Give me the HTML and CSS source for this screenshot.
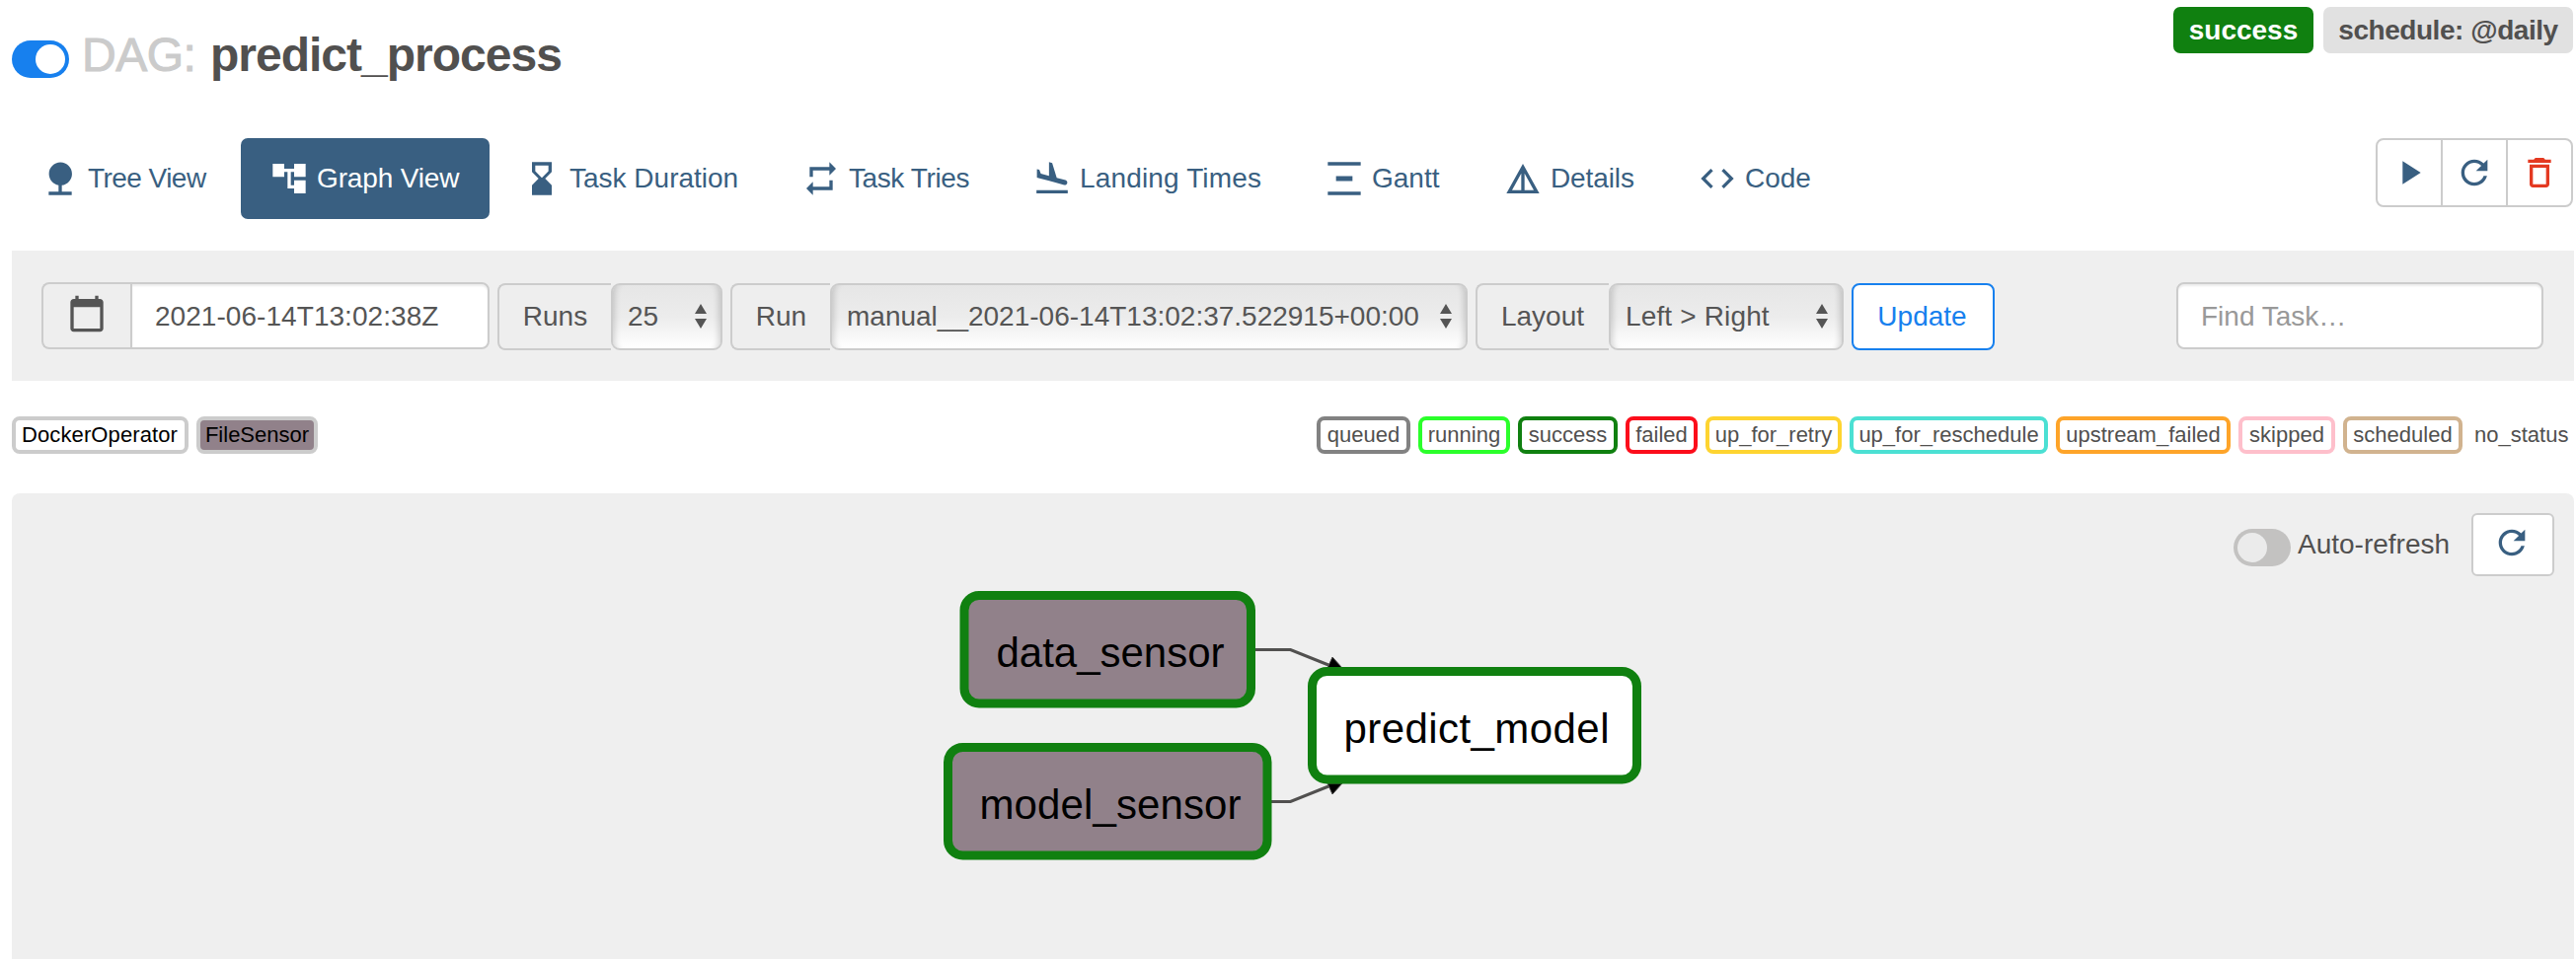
FILE: index.html
```html
<!DOCTYPE html>
<html lang="en">
<head>
<meta charset="utf-8">
<title>predict_process - Graph</title>
<link rel="stylesheet" href="styles.css">
</head>
<body>
<div class="page">
  <header class="dag-header">
    <h1 class="dag-title">
      <span class="toggle toggle-on"></span>
      <span class="dag-prefix">DAG:</span>
      <span class="dag-name">predict_process</span>
    </h1>
    <div class="badges">
      <span class="badge badge-success">success</span>
      <span class="badge badge-schedule">schedule: @daily</span>
    </div>
  </header>

  <div class="nav-row">
    <nav class="tabs">
      <a class="tab tab-tree"><svg class="icon" viewBox="0 0 24 24"><path d="M13 16.12c3.47-.41 6.17-3.36 6.17-6.95 0-3.87-3.13-7-7-7s-7 3.13-7 7c0 3.47 2.52 6.34 5.83 6.89V20H5v2h14v-2h-6v-3.88z"/></svg><span>Tree View</span></a>
      <a class="tab tab-graph active"><svg class="icon" viewBox="0 0 24 24"><path d="M22 11V3h-7v3H9V3H2v8h7V8h2v10h4v3h7v-8h-7v3h-2V8h2v3z"/></svg><span>Graph View</span></a>
      <a class="tab tab-duration"><svg class="icon" viewBox="0 0 24 24"><path d="M18 22l-.01-6L14 12l3.99-4.01L18 2H6v6l4 4-4 3.99V22h12zM8 7.5V4h8v3.5l-4 4-4-4z"/></svg><span>Task Duration</span></a>
      <a class="tab tab-tries"><svg class="icon" viewBox="0 0 24 24"><path d="M7 7h10v3l4-4-4-4v3H5v6h2V7zm10 10H7v-3l-4 4 4 4v-3h12v-6h-2v4z"/></svg><span>Task Tries</span></a>
      <a class="tab tab-landing"><svg class="icon" viewBox="0 0 24 24"><path d="M2.5 19h19v2h-19zm7.18-5.73l4.35 1.16 5.31 1.42c.8.21 1.62-.26 1.84-1.06.21-.8-.26-1.62-1.06-1.84l-5.31-1.42-2.76-9.02L10.12 2v8.28L5.15 8.95l-.93-2.32-1.45-.39v5.17l1.6.43 5.31 1.43z"/></svg><span>Landing Times</span></a>
      <a class="tab tab-gantt"><svg class="icon" viewBox="0 0 24 24"><path d="M22 2v2H2V2h20zM7 10.5v3h10v-3H7zM2 20v2h20v-2H2z"/></svg><span>Gantt</span></a>
      <a class="tab tab-details"><svg class="icon" viewBox="0 0 24 24"><path d="M12 3L2 21h20L12 3zm1 5.92L18.6 19H13V8.920zm-2 0V19H5.4L11 8.920z"/></svg><span>Details</span></a>
      <a class="tab tab-code"><svg class="icon" viewBox="0 0 24 24"><path d="M9.400 16.600L4.800 12l4.600-4.600L8 6l-6 6 6 6 1.400-1.400zm5.200 0l4.600-4.600-4.600-4.600L16 6l6 6-6 6-1.400-1.400z"/></svg><span>Code</span></a>
    </nav>
    <div class="actions">
      <button class="action"><svg class="icon" viewBox="0 0 24 24"><path d="M8 5v14l11-7z"/></svg></button>
      <button class="action"><svg class="icon" viewBox="0 0 24 24"><path d="M17.650 6.350C16.200 4.900 14.210 4 12 4c-4.420 0-7.990 3.580-7.990 8s3.570 8 7.990 8c3.730 0 6.840-2.550 7.730-6h-2.080c-.82 2.330-3.040 4-5.650 4-3.310 0-6-2.690-6-6s2.690-6 6-6c1.660 0 3.140.69 4.220 1.780L13 11h7V4l-2.350 2.350z"/></svg></button>
      <button class="action action-delete"><svg class="icon" viewBox="0 0 24 24"><path d="M16 9v10H8V9h8m-1.500-6h-5l-1 1H5v2h14V4h-3.500l-1-1zM18 7H6v12c0 1.100.9 2 2 2h8c1.100 0 2-.9 2-2V7z"/></svg></button>
    </div>
  </div>

  <form class="filters">
    <div class="group group-date">
      <span class="addon addon-icon"><svg class="icon" viewBox="0 0 24 24"><path d="M20 3h-1V1h-2v2H7V1H5v2H4c-1.100 0-2 .9-2 2v16c0 1.100.9 2 2 2h16c1.100 0 2-.9 2-2V5c0-1.100-.9-2-2-2zm0 18H4V8h16v13z"/></svg></span>
      <span class="field">2021-06-14T13:02:38Z</span>
    </div>
    <div class="group group-runs">
      <span class="addon">Runs</span>
      <span class="select"><span>25</span><svg class="arrows" viewBox="0 0 12 25"><path d="M6 0l6 10H0zM0 15h12L6 25z"/></svg></span>
    </div>
    <div class="group group-run">
      <span class="addon">Run</span>
      <span class="select"><span>manual__2021-06-14T13:02:37.522915+00:00</span><svg class="arrows" viewBox="0 0 12 25"><path d="M6 0l6 10H0zM0 15h12L6 25z"/></svg></span>
    </div>
    <div class="group group-layout">
      <span class="addon">Layout</span>
      <span class="select"><span>Left &gt; Right</span><svg class="arrows" viewBox="0 0 12 25"><path d="M6 0l6 10H0zM0 15h12L6 25z"/></svg></span>
    </div>
    <button class="update" type="button">Update</button>
    <div class="search">Find Task…</div>
  </form>

  <div class="legend">
    <div class="legend-group operators">
      <span class="chip chip-docker">DockerOperator</span>
      <span class="chip chip-sensor">FileSensor</span>
    </div>
    <div class="legend-group states">
      <span class="chip queued">queued</span>
      <span class="chip running">running</span>
      <span class="chip success">success</span>
      <span class="chip failed">failed</span>
      <span class="chip retry">up_for_retry</span>
      <span class="chip reschedule">up_for_reschedule</span>
      <span class="chip upstream">upstream_failed</span>
      <span class="chip skipped">skipped</span>
      <span class="chip scheduled">scheduled</span>
      <span class="chip none">no_status</span>
    </div>
  </div>

  <main class="graph">
    <svg class="canvas" viewBox="0 0 2596 472">
      <g class="edges">
        <path d="M1260 158.500h35.500l46 18.500"/>
        <path d="M1276 312.500h19.500l46-18.500"/>
      </g>
      <path class="arrowhead" d="M1338 166l10 11h-15zM1338 305l10-11h-15z"/>
      <g class="node node-sensor">
        <rect x="965" y="103.500" width="290.500" height="109.500" rx="15"/>
        <text x="997.500" y="176" textLength="231">data_sensor</text>
      </g>
      <g class="node node-sensor">
        <rect x="948.500" y="257.500" width="323.500" height="109.500" rx="15"/>
        <text x="980.500" y="330" textLength="265">model_sensor</text>
      </g>
      <g class="node node-docker">
        <rect x="1317.500" y="180.500" width="329" height="109.500" rx="15"/>
        <text x="1349.500" y="253" textLength="269">predict_model</text>
      </g>
    </svg>
    <div class="refresh-bar">
      <span class="toggle toggle-off"></span>
      <span class="refresh-label">Auto-refresh</span>
      <button class="refresh"><svg class="icon" viewBox="0 0 24 24"><path d="M17.650 6.350C16.200 4.900 14.210 4 12 4c-4.420 0-7.990 3.580-7.990 8s3.570 8 7.990 8c3.730 0 6.840-2.550 7.730-6h-2.080c-.82 2.330-3.040 4-5.650 4-3.310 0-6-2.690-6-6s2.690-6 6-6c1.660 0 3.140.69 4.220 1.780L13 11h7V4l-2.350 2.350z"/></svg></button>
    </div>
  </main>
</div>
</body>
</html>
```
FILE: styles.css
```css
* { box-sizing: border-box; }

body {
  margin: 0;
  background: #fff;
  color: #51504f;
  font: 28px/40px "Liberation Sans", Arial, sans-serif;
}

button { font: inherit; margin: 0; padding: 0; background: #fff; }

.page {
  display: flex;
  flex-direction: column;
  height: 972px;
  padding: 0 2px 0 12px;
  overflow: hidden;
  white-space: nowrap;
}

.icon { width: 40px; height: 40px; fill: currentColor; flex: none; }

/* Header */
.dag-header {
  display: flex;
  justify-content: space-between;
  align-items: flex-start;
  height: 140px;
  margin-right: 1px;
}
.dag-title {
  display: flex;
  align-items: center;
  height: 60px;
  margin: 26px 0 0;
  font-size: 48px;
  line-height: 60px;
  font-weight: 400;
}
.toggle {
  display: flex;
  width: 58px;
  height: 38px;
  padding: 4px;
  border-radius: 19px;
  flex: none;
}
.toggle::before {
  content: "";
  width: 30px;
  height: 30px;
  border-radius: 50%;
}
.toggle-on { justify-content: flex-end; background: #1780ee; margin-top: 8px; }
.toggle-on::before { background: #fff; }
.toggle-off { background: #c3c2c1; }
.toggle-off::before { background: #ebebeb; }
.dag-prefix {
  width: 143px;
  padding-left: 13px;
  color: #cbcbcb;
  letter-spacing: -0.5px;
  -webkit-text-stroke: 1px #cbcbcb;
}
.dag-name { font-weight: 700; letter-spacing: -1px; }

.badges { display: flex; gap: 10px; padding-top: 7px; font-weight: 700; }
.badge { height: 47px; line-height: 47px; border-radius: 7px; text-align: center; }
.badge-success { width: 142px; background: #108010; color: #fff; }
.badge-schedule { width: 253px; background: #e1e1e1; letter-spacing: -0.45px; }

/* Tabs */
.nav-row { display: flex; justify-content: space-between; height: 82px; margin-right: 1px; }
.tabs { display: flex; gap: 4px; color: #395f81; }
.tab {
  display: flex;
  align-items: center;
  gap: 8px;
  padding-left: 29px;
  border-radius: 7px;
}
.tab.active { background: #395f81; color: #fff; }
.tab-tree { width: 228px; letter-spacing: -0.55px; }
.tab-graph { width: 252px; letter-spacing: -0.15px; }
.tab-duration { width: 279px; }
.tab-tries { width: 230px; letter-spacing: -0.4px; }
.tab-landing { width: 292px; letter-spacing: 0.15px; }
.tab-gantt { width: 177px; }
.tab-details { width: 193px; letter-spacing: -0.1px; }
.tab-code { width: 180px; }

.actions { display: flex; height: 70px; color: #395f81; }
.action {
  display: flex;
  align-items: center;
  justify-content: center;
  width: 68px;
  margin-left: -2px;
  border: 2px solid #ccc;
  color: inherit;
}
.action:first-child { border-radius: 8px 0 0 8px; }
.action:last-child { border-radius: 0 8px 8px 0; }
.action-delete { color: #e43921; }

/* Filter bar */
.filters {
  display: flex;
  align-items: flex-start;
  height: 132px;
  margin-top: 32px;
  padding: 33px 31px 0 30px;
  background: #efefef;
  color: #555;
}
.group { display: flex; height: 68px; margin-right: 8px; }
.addon {
  display: flex;
  align-items: center;
  justify-content: center;
  border: 2px solid #ccc;
  border-right: 0;
  border-radius: 8px 0 0 8px;
  background: #eee;
}
.addon-icon { width: 90px; padding-bottom: 4px; }
.group-date { width: 454px; margin: -1px 8px 0 0; }
.field {
  flex: 1;
  padding-left: 23px;
  line-height: 65px;
  letter-spacing: 0.05px;
  border: 2px solid #ccc;
  border-radius: 0 8px 8px 0;
  background: #fff;
  box-shadow: inset 0 2px 2px rgba(0, 0, 0, 0.075);
}
.select {
  display: flex;
  flex: 1;
  align-items: center;
  justify-content: space-between;
  padding: 0 14px 1px 15px;
  border: 2px solid #ccc;
  border-radius: 9px;
  background: linear-gradient(#e6e6e6, #ececec 50%, #fff);
  box-shadow: inset 8px 0 6px -6px rgba(0, 0, 0, 0.16), inset -8px 0 6px -6px rgba(0, 0, 0, 0.16);
}
.arrows { width: 12px; height: 25px; fill: #555; }
.group-runs { width: 228px; }
.group-runs .addon { width: 115px; }
.group-run { width: 747px; }
.group-run .addon { width: 101px; }
.group-layout { width: 373px; }
.group-layout .addon { width: 135px; padding-right: 1px; }
.group-layout .select span { letter-spacing: 0.15px; }
.update {
  width: 145px;
  height: 68px;
  padding-right: 2px;
  border: 2px solid #1780ee;
  border-radius: 8px;
  color: #1780ee;
}
.search {
  width: 372px;
  height: 68px;
  margin: -1px 0 0 auto;
  padding-left: 23px;
  line-height: 65px;
  border: 2px solid #ccc;
  border-radius: 8px;
  background: #fff;
  color: #999;
  box-shadow: inset 0 2px 2px rgba(0, 0, 0, 0.075);
}

/* Legend */
.legend { display: flex; justify-content: space-between; margin: 36px 2px 40px 0; font-size: 22px; }
.legend-group { display: flex; gap: 8px; }
.chip {
  height: 38px;
  line-height: 29px;
  text-align: center;
  border: 4px solid #ccc;
  border-radius: 8px;
}
.operators { color: #000; }
.chip-docker { width: 179px; letter-spacing: 0.1px; padding-right: 1px; }
.chip-sensor { width: 123px; background: #91818a; }
.queued { width: 95px; border-color: #828282; }
.running { width: 93px; border-color: #2bff2b; }
.success { width: 101px; border-color: #108010; }
.failed { width: 73px; border-color: #fc0d1b; }
.retry { width: 138px; border-color: #fed430; }
.reschedule { width: 201px; border-color: #4be0d3; }
.upstream { width: 177px; border-color: #fea429; }
.skipped { width: 98px; border-color: #febfcb; }
.scheduled { width: 121px; border-color: #d1b38f; }
.none { width: 103px; border-color: #fff; }

/* Graph */
.graph {
  position: relative;
  height: 472px;
  background: #efefef;
  border-radius: 8px 8px 0 0;
}
.canvas { display: block; width: 2596px; height: 472px; }
.edges { fill: none; stroke: #51504f; stroke-width: 3px; }
.arrowhead { fill: #000; stroke: #51504f; stroke-width: 1px; }
.node rect { stroke: #108010; stroke-width: 9px; }
.node text { font-size: 42px; fill: #000; }
.node-sensor rect { fill: #91818a; }
.node-docker rect { fill: #fff; }
.refresh-bar {
  position: absolute;
  top: 20px;
  right: 20px;
  display: flex;
  align-items: center;
  height: 64px;
}
.refresh-bar .toggle { margin-top: 6px; }
.refresh-label { width: 183px; padding-left: 7px; }
.refresh {
  display: flex;
  align-items: center;
  justify-content: center;
  width: 84px;
  height: 64px;
  padding: 0 2px 4px 0;
  border: 2px solid #ccc;
  border-radius: 6px;
  color: #395f81;
}
```
